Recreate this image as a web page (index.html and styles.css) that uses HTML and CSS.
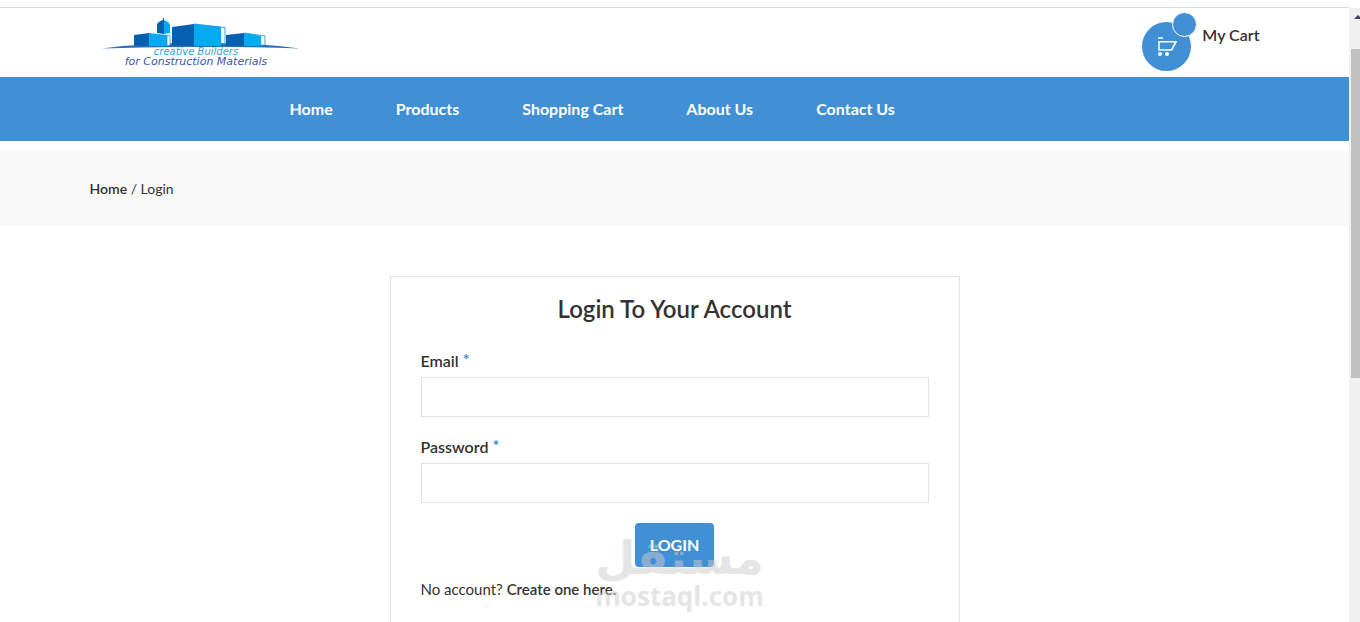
FILE: index.html
```html
<!DOCTYPE html>
<html lang="en">
<head>
<meta charset="utf-8">
<meta name="viewport" content="width=device-width, initial-scale=1">
<title>Login</title>
<link rel="stylesheet" href="styles.css">
</head>
<body class="window">
<div class="page">
  <header class="header">
    <div class="container header-row">
      <a class="logo" href="#" aria-label="Creative Builders home">
        <svg class="logo-art" width="200" height="52" viewBox="0 0 200 52">
          <path d="M1 30.500Q40 25 100 25Q160 25 199 30.500Q150 28.500 100 29Q50 28.500 1 30.500Z" fill="#2a6fbd"/>
          <path d="M33 17L48 15V28H33Z" fill="#0560b0"/>
          <path d="M48 15L66 17V28H48Z" fill="#05abf0"/>
          <path d="M66 17.500L69 17V27.500H66Z" fill="#fff" stroke="#0880cc" stroke-width=".6"/>
          <path d="M56 15V6Q58 3 62 2V0H63V16Z" fill="#0560b0"/>
          <path d="M63 2Q68 4 69 7V15L63 16Z" fill="#05abf0"/>
          <path d="M71 9L93 6V28H71Z" fill="#0560b0"/>
          <path d="M93 6L120 9V28H93Z" fill="#05abf0"/>
          <path d="M93 6L124 9.500V27.500" fill="none" stroke="#0890d8" stroke-width=".8"/>
          <path d="M125 17L143 15V28H125Z" fill="#0560b0"/>
          <path d="M143 15L160 18V28H143Z" fill="#05abf0"/>
          <path d="M143 15L164 18V27.500" fill="none" stroke="#0890d8" stroke-width=".8"/>
          <text class="logo-name" x="95" y="37" text-anchor="middle">creative Builders</text>
          <text class="logo-sub" x="95" y="47" text-anchor="middle">for Construction Materials</text>
        </svg>
      </a>
      <a class="cart" href="#">
        <span class="cart-disc">
          <svg width="20" height="20" viewBox="0 0 20 20" fill="none" stroke="#fff" stroke-width="1.600">
            <path d="M1 1H6M2 4.800H19L14.500 13H2V4"/>
            <circle cx="3" cy="17" r="2" fill="#fff" stroke="none"/>
            <circle cx="10" cy="17" r="2" fill="#fff" stroke="none"/>
          </svg>
          <span class="cart-badge"></span>
        </span>
        <span class="cart-label">My Cart</span>
      </a>
    </div>
  </header>
  <nav class="nav">
    <div class="container nav-row">
      <a href="#">Home</a>
      <a href="#">Products</a>
      <a href="#">Shopping Cart</a>
      <a href="#">About Us</a>
      <a href="#">Contact Us</a>
    </div>
  </nav>
  <div class="crumbs">
    <div class="container"><a href="#">Home</a> / <span>Login</span></div>
  </div>
  <main class="main">
    <form class="card">
      <h1 class="title">Login To Your Account</h1>
      <div class="field">
        <label for="email">Email <span class="star">*</span></label>
        <input id="email" type="email">
      </div>
      <div class="field">
        <label for="password">Password <span class="star">*</span></label>
        <input id="password" type="password">
      </div>
      <div class="actions">
        <button class="login" type="button">LOGIN</button>
        <div class="mark" aria-hidden="true">
          <span class="mark-ar" lang="ar" dir="rtl">مستقل</span>
          <span class="mark-en">mostaql.com</span>
        </div>
      </div>
      <p class="signup">No account? <a href="#">Create one here.</a></p>
    </form>
  </main>
</div>
<div class="scroll" aria-hidden="true">
  <span class="scroll-arrow"></span>
  <span class="scroll-thumb"></span>
</div>
</body>
</html>
```
FILE: styles.css
```css
* { box-sizing: border-box; }
.window {
  margin: 0;
  height: 100vh;
  display: flex;
  overflow: hidden;
  background: #fff;
  color: #333;
  font-family: Lato, "Liberation Sans", sans-serif;
  font-size: 15px;
  line-height: 24px;
}
a { color: inherit; text-decoration: none; }
.page { flex: 1; min-width: 0; padding-top: 7px; overflow: hidden; }
.container { width: 100%; max-width: 1170px; margin: 0 auto; }

.header { border-top: 1px solid #ddd; }
.header-row {
  display: flex;
  justify-content: space-between;
  align-items: flex-start;
  padding: 4px 0 6px 11px;
}
.logo { padding-top: 6px; }
.logo-art { display: block; overflow: visible; }
.logo-name, .logo-sub { font-family: "DejaVu Sans", sans-serif; font-style: italic; }
.logo-name { font-size: 10px; fill: #35a2e2; }
.logo-sub { font-size: 11px; fill: #4156a8; }
.cart { display: flex; gap: 11px; padding-top: 10px; }
.cart-disc {
  position: relative;
  width: 49px;
  height: 49px;
  border-radius: 50%;
  background: #418fd5;
  display: grid;
  place-items: center;
}
.cart-badge {
  position: absolute;
  top: -10px;
  right: -6px;
  width: 25px;
  height: 25px;
  border: 1px solid #fff;
  border-radius: 50%;
  background: #418fd5;
}
.cart-label { font-size: 16px; font-weight: 600; line-height: 26px; }

.nav { background: #418fd5; }
.nav-row {
  display: flex;
  gap: 63px;
  padding: 20px 0 20px 200px;
  color: #fff;
  font-size: 16px;
  font-weight: 700;
}

.crumbs {
  margin-top: 10px;
  padding: 26px 0 25px;
  background: #f8f8f8;
  font-size: 14px;
}
.crumbs a { font-weight: 600; }

.main { padding: 50px 15px; }
.card {
  max-width: 570px;
  margin: 0 auto;
  padding: 16px 30px 60px;
  border: 1px solid #e2e2e2;
}
.title {
  margin: 0 0 24px;
  font-size: 24px;
  font-weight: 600;
  line-height: 32px;
  text-align: center;
}
.field { margin-bottom: 18px; }
.field label {
  display: block;
  margin-bottom: 4px;
  font-size: 16px;
  font-weight: 600;
  line-height: 24px;
}
.star { color: #418fd5; font-weight: 700; line-height: 1; vertical-align: 2px; }
.field input {
  display: block;
  width: 100%;
  height: 40px;
  padding: 0 12px;
  border: 1px solid #e2e2e2;
  font: inherit;
}
.actions {
  position: relative;
  display: flex;
  justify-content: center;
  margin-top: 20px;
}
.login {
  height: 44px;
  padding: 0 15px;
  border: 0;
  border-radius: 4px;
  background: #418fd5;
  color: #fff;
  font: 700 16px/24px Lato, "Liberation Sans", sans-serif;
}
.mark {
  position: absolute;
  top: 5px;
  left: 50%;
  width: 164px;
  margin-left: -77px;
  display: flex;
  flex-direction: column;
  align-items: center;
  color: #cdcdcd;
  opacity: .5;
  pointer-events: none;
}
.mark-ar { font: 700 46px/60px "DejaVu Sans", sans-serif; }
.mark-en { font: 700 26px/16px "Open Sans", sans-serif; }
.signup { margin: 10px 0 0; }
.signup a { font-weight: 600; }

.scroll {
  width: 11px;
  padding: 7px 0 0 2px;
  background: linear-gradient(#fff 8px, #f0f0f0 8px);
}
.scroll-arrow {
  display: block;
  width: 0;
  margin: 8px 0 0 3px;
  border: 4px solid transparent;
  border-top: 0;
  border-bottom-color: #404060;
}
.scroll-thumb { display: block; height: 329px; margin-top: 30px; background: #c1c1c1; }
```
